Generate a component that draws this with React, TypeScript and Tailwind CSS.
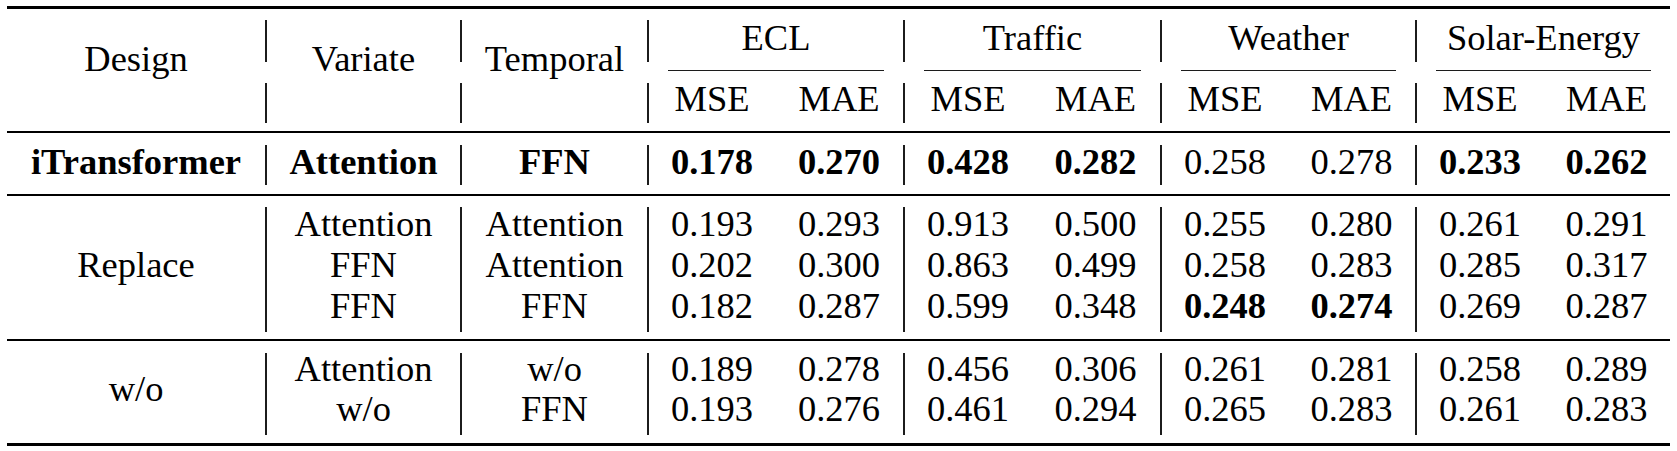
import { Fragment } from "react";

type Cell = [string, boolean];
type Row = { v: string; t: string; bold?: boolean; vals: Cell[] };

const groups = ["ECL", "Traffic", "Weather", "Solar-Energy"];
// width of each group after its 2px vertical rule
const groupW = ["w-[254px]", "w-[255px]", "w-[253px]", "w-[253px]"];

const top: Row[] = [
  {
    v: "Attention",
    t: "FFN",
    bold: true,
    vals: [
      ["0.178", true], ["0.270", true], ["0.428", true], ["0.282", true],
      ["0.258", false], ["0.278", false], ["0.233", true], ["0.262", true],
    ],
  },
];

const replace: Row[] = [
  {
    v: "Attention",
    t: "Attention",
    vals: [
      ["0.193", false], ["0.293", false], ["0.913", false], ["0.500", false],
      ["0.255", false], ["0.280", false], ["0.261", false], ["0.291", false],
    ],
  },
  {
    v: "FFN",
    t: "Attention",
    vals: [
      ["0.202", false], ["0.300", false], ["0.863", false], ["0.499", false],
      ["0.258", false], ["0.283", false], ["0.285", false], ["0.317", false],
    ],
  },
  {
    v: "FFN",
    t: "FFN",
    vals: [
      ["0.182", false], ["0.287", false], ["0.599", false], ["0.348", false],
      ["0.248", true], ["0.274", true], ["0.269", false], ["0.287", false],
    ],
  },
];

const without: Row[] = [
  {
    v: "Attention",
    t: "w/o",
    vals: [
      ["0.189", false], ["0.278", false], ["0.456", false], ["0.306", false],
      ["0.261", false], ["0.281", false], ["0.258", false], ["0.289", false],
    ],
  },
  {
    v: "w/o",
    t: "FFN",
    vals: [
      ["0.193", false], ["0.276", false], ["0.461", false], ["0.294", false],
      ["0.265", false], ["0.283", false], ["0.261", false], ["0.283", false],
    ],
  },
];

function VRule({ segs }: { segs: string[] }) {
  return (
    <div className="w-[2px] shrink-0">
      {segs.map((s, i) => (
        <div key={i} className={`${s} bg-[#1c1c1c]`} />
      ))}
    </div>
  );
}

const headSegs = ["mt-[11px] h-[42px]", "mt-[21px] h-[40px]"];

function Header() {
  return (
    <div className="flex h-[122px] leading-[41px]">
      <div className="w-[258px] pt-[29px] text-center">Design</div>
      <VRule segs={headSegs} />
      <div className="w-[193px] pt-[29px] text-center">Variate</div>
      <VRule segs={headSegs} />
      <div className="w-[185px] pt-[29px] text-center">Temporal</div>
      {groups.map((g, i) => (
        <Fragment key={g}>
          <VRule segs={headSegs} />
          <div className={`${groupW[i]} flex flex-col`}>
            <div className="pt-[8px] text-center">{g}</div>
            <div className="mt-[12px] mx-[19px] h-px bg-[#1c1c1c]" />
            <div className="mt-[7px] flex">
              <div className="w-[126px] text-center">MSE</div>
              <div className="flex-1 text-center">MAE</div>
            </div>
          </div>
        </Fragment>
      ))}
    </div>
  );
}

function Band({
  label,
  rows,
  cls,
  segs,
  pad,
  labelCls,
}: {
  label: string;
  rows: Row[];
  cls: string;
  segs: string[];
  pad: string;
  labelCls: string;
}) {
  return (
    <div className={`flex ${cls}`}>
      <div className={`w-[258px] text-center ${labelCls}`}>{label}</div>
      <VRule segs={segs} />
      <div className={`w-[193px] text-center ${pad}`}>
        {rows.map((r, i) => (
          <div key={i} className={r.bold ? "font-bold" : ""}>
            {r.v}
          </div>
        ))}
      </div>
      <VRule segs={segs} />
      <div className={`w-[185px] text-center ${pad}`}>
        {rows.map((r, i) => (
          <div key={i} className={r.bold ? "font-bold" : ""}>
            {r.t}
          </div>
        ))}
      </div>
      {groups.map((g, gi) => (
        <Fragment key={g}>
          <VRule segs={segs} />
          <div className={`${groupW[gi]} flex ${pad}`}>
            <div className="w-[126px] text-center">
              {rows.map((r, i) => (
                <div key={i} className={r.vals[gi * 2][1] ? "font-bold" : ""}>
                  {r.vals[gi * 2][0]}
                </div>
              ))}
            </div>
            <div className="flex-1 text-center">
              {rows.map((r, i) => (
                <div key={i} className={r.vals[gi * 2 + 1][1] ? "font-bold" : ""}>
                  {r.vals[gi * 2 + 1][0]}
                </div>
              ))}
            </div>
          </div>
        </Fragment>
      ))}
    </div>
  );
}

export default function App() {
  return (
    <div className="min-h-screen bg-white pl-[7px] pt-[6px] text-black font-serif text-[36.5px]">
      <div className="w-[1663px] font-[Liberation_Serif,serif]">
        <div className="h-[3px] bg-black" />
        <Header />
        <div className="h-[2px] bg-black" />
        <Band
          label="iTransformer"
          rows={top}
          cls="h-[61px] leading-[41px]"
          segs={["mt-[12px] h-[40px]"]}
          pad="pt-[8px]"
          labelCls="pt-[8px] font-bold"
        />
        <div className="h-[2px] bg-black" />
        <Band
          label="Replace"
          rows={replace}
          cls="h-[143px] leading-[41px]"
          segs={["mt-[11px] h-[125px]"]}
          pad="pt-[7px]"
          labelCls="pt-[48px]"
        />
        <div className="h-[2px] bg-black" />
        <Band
          label="w/o"
          rows={without}
          cls="h-[102px] leading-[40px]"
          segs={["mt-[12px] h-[82px]"]}
          pad="pt-[8px]"
          labelCls="pt-[28px]"
        />
        <div className="h-[3px] bg-black" />
      </div>
    </div>
  );
}
